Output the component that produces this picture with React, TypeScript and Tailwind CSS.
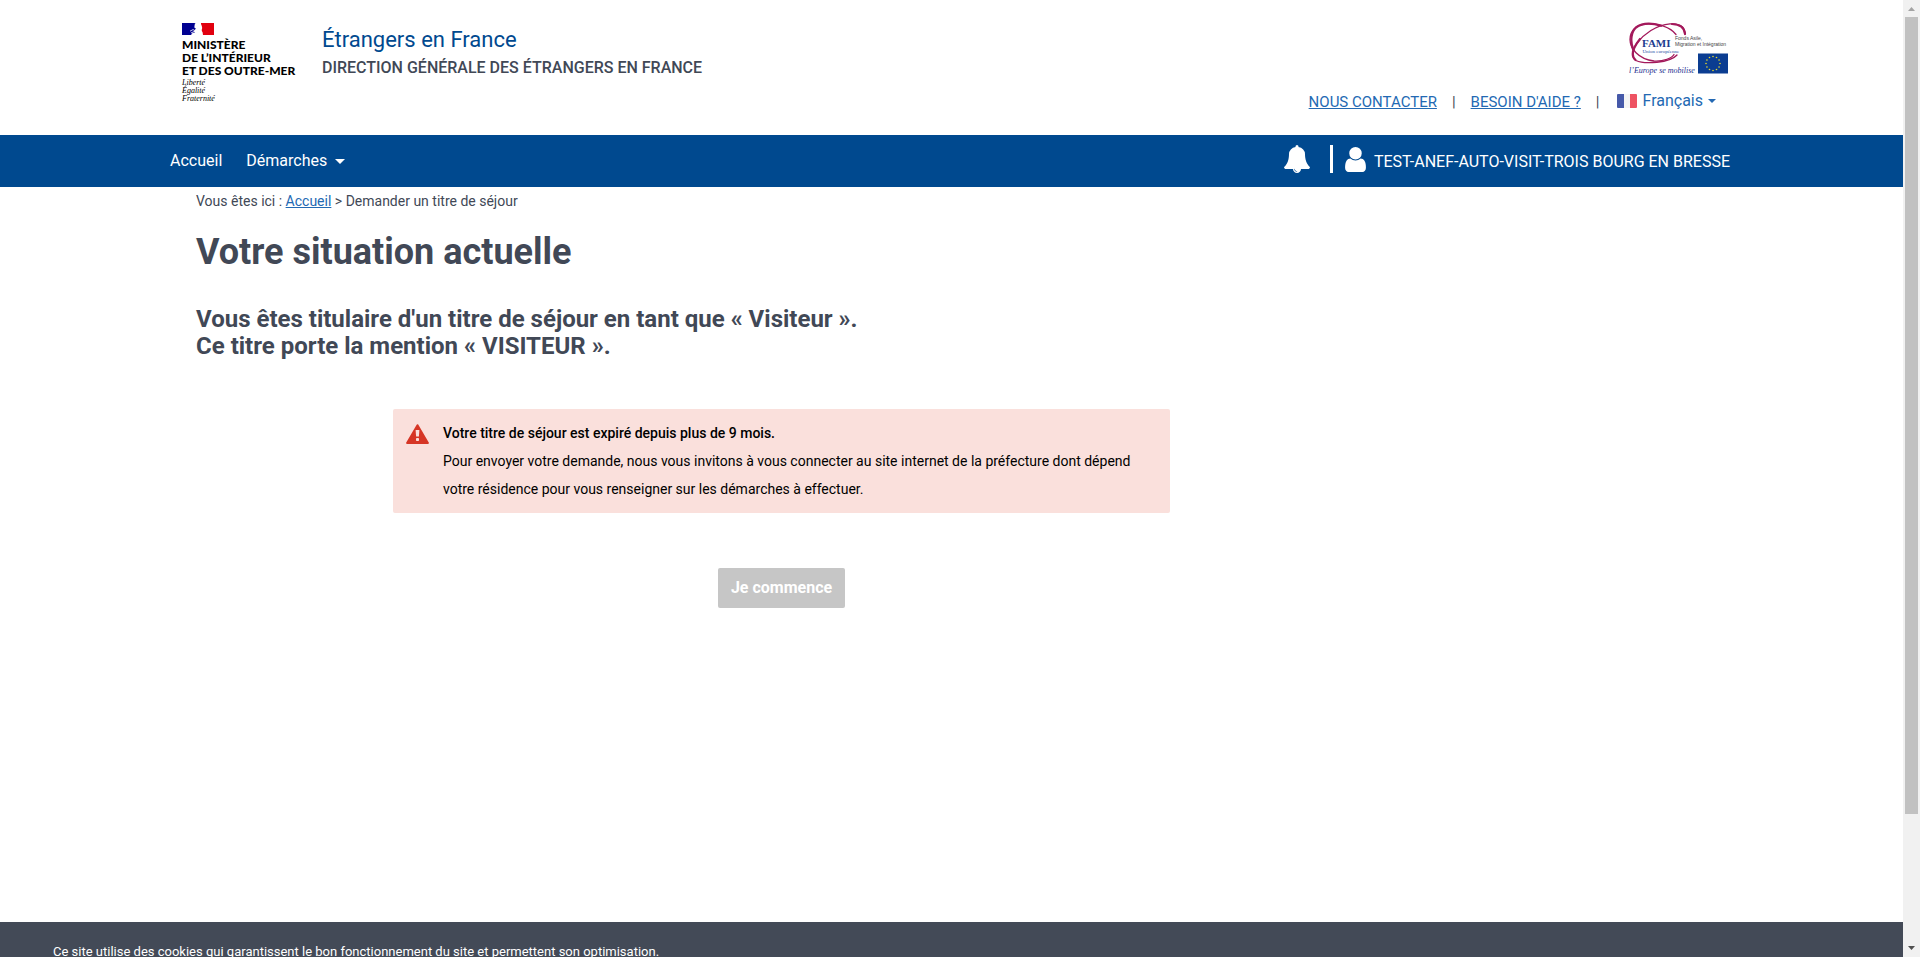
import React from "react";

const SANS = "font-['Roboto','Liberation_Sans',sans-serif]";

function MinistryLogo() {
  return (
    <a href="#" className="block w-[117px] shrink-0 text-black no-underline">
      <svg viewBox="0 0 32 12" className="block h-3 w-8" aria-hidden="true">
        <rect width="14" height="12" fill="#000091" />
        <rect x="19" width="13" height="12" fill="#e1000f" />
        <path
          d="M13 0 Q15 1 17.5 0.3 Q19.6 0.8 19.8 3 Q20.6 5 19.8 6.6 Q19.4 8.2 20.6 9.2 L21 12 H9 Q10 9.6 13 9.6 L11.6 8.2 L14 5.6 Q12 5.2 12.4 3.4 Z"
          fill="#fff"
        />
        <path d="M8 8.2 L11 6.6 L12.6 7.4 M9 10 L12 8.6" stroke="#fff" strokeWidth="0.8" fill="none" />
      </svg>
      <span className="mt-[3px] block whitespace-nowrap font-['Lato','Open_Sans',sans-serif] text-xs leading-[13px] font-black">
        MINISTÈRE
        <br />
        DE L’INTÉRIEUR
        <br />
        ET DES OUTRE-MER
      </span>
      <span className="mt-[2px] block font-['Liberation_Serif',serif] text-[8px] leading-[8px] italic">
        Liberté
        <br />
        Égalité
        <br />
        Fraternité
      </span>
    </a>
  );
}

function FamiLogo() {
  const stars = Array.from({ length: 12 }, (_, i) => {
    const angle = (i * Math.PI) / 6;
    return { x: 85 + 7 * Math.sin(angle), y: 43.5 - 7 * Math.cos(angle) };
  });
  return (
    <svg viewBox="0 0 102 58" className="block h-[58px] w-[102px]" role="img" aria-label="FAMI">
      <g fill="none" stroke="#a3195b" strokeLinecap="round">
        <path d="M48 13.5 C42 6 30 2.5 20 2.8 C8 3 2 10 2 18.5 C2 27 10 38 26 40 C36 40.5 44 37 46 33.5" strokeWidth="1.3" />
        <path d="M33 4.6 C24 2 14 2 8 6.5 C3 11 2 20 5 28" strokeWidth="2.3" />
        <path d="M57 13.5 C57 5 51 2.6 42 2.8 C28 4 16 13 9 22 C3 31 4 37 8 39.5 C16 43.5 42 42 49 34" strokeWidth="1.3" />
        <path d="M57 13 C56.5 6 52 3.4 44 3 M12 18 C4 28 3 35 7.5 39" strokeWidth="2.2" />
      </g>
      <text x="14" y="25.5" fontFamily="'Liberation Serif', serif" fontSize="11" fontWeight="bold" fill="#1d3c8f">FAMI</text>
      <text x="47" y="19" fontFamily="'Liberation Sans', sans-serif" fontSize="5" fill="#444">Fonds Asile,</text>
      <text x="47" y="24.5" fontFamily="'Liberation Sans', sans-serif" fontSize="5" fill="#444">Migration et Intégration</text>
      <text x="14.5" y="32" fontFamily="'Liberation Serif', serif" fontSize="5" fill="#1d4b9f">Union européenne</text>
      <text x="1" y="52" fontFamily="'Liberation Serif', serif" fontSize="8" fontStyle="italic" fill="#1d2f8f">l’Europe se mobilise</text>
      <rect x="70" y="32.5" width="30" height="20" fill="#0b3d91" />
      {stars.map((s, i) => (
        <circle key={i} cx={s.x} cy={s.y - 1} r="0.8" fill="#e8d92c" />
      ))}
    </svg>
  );
}

function Caret({ className }: { className: string }) {
  return (
    <svg viewBox="0 0 10 5" className={className} fill="currentColor" aria-hidden="true">
      <path d="M0 0 H10 L5 5 Z" />
    </svg>
  );
}

function FrenchFlag() {
  return (
    <svg viewBox="0 0 20 14" className="h-3.5 w-5" aria-hidden="true">
      <path d="M1 0 H7 V14 H1 Q0 14 0 13 V1 Q0 0 1 0 Z" fill="#4659a9" />
      <rect x="7" width="6" height="14" fill="#f4f4f4" />
      <path d="M13 0 H19 Q20 0 20 1 V13 Q20 14 19 14 H13 Z" fill="#ee5363" />
    </svg>
  );
}

function BellIcon() {
  return (
    <svg viewBox="64 0 1664 1792" className="h-7 w-[26px]" fill="currentColor" aria-hidden="true">
      <path d="M912 1696q0-16-16-16-59 0-101.5-42.5t-42.5-101.5q0-16-16-16t-16 16q0 73 51.5 124.5t124.5 51.5q16 0 16-16zm816-288q0 52-38 90t-90 38h-448q0 106-75 181t-181 75-181-75-75-181h-448q-52 0-90-38t-38-90q50-42 91-88t85-119.5 74.5-158.5 50-206 19.5-260q0-152 117-282.5t307-158.5q-8-19-8-39 0-40 28-68t68-28 68 28 28 68q0 20-8 39 190 28 307 158.5t117 282.5q0 139 19.5 260t50 206 74.5 158.5 85 119.5 91 88z" />
    </svg>
  );
}

function UserIcon() {
  return (
    <svg viewBox="256 128 1280 1536" className="h-[25px] w-[21px]" fill="currentColor" aria-hidden="true">
      <path d="M1536 1399q0 109-62.5 187t-150.5 78h-854q-88 0-150.5-78t-62.5-187q0-85 8.5-160.5t31.5-152 58.5-131 94-89 134.5-34.5q131 128 313 128t313-128q76 0 134.5 34.5t94 89 58.5 131 31.5 152 8.5 160.5zm-256-887q0 159-112.5 271.5t-271.5 112.5-271.5-112.5-112.5-271.5 112.5-271.5 271.5-112.5 271.5 112.5 112.5 271.5z" />
    </svg>
  );
}

function WarningIcon() {
  return (
    <svg viewBox="0 0 23 20" className="mt-[5px] h-5 w-[23px] shrink-0" aria-hidden="true">
      <path d="M11.5 1.2 L21.9 18.9 H1.1 Z" fill="#d63626" stroke="#d63626" strokeWidth="2" strokeLinejoin="round" />
      <path d="M9.6 6 H13.4 L12.9 12.6 H10.1 Z" fill="#fae0dc" />
      <rect x="10" y="14" width="3" height="3" rx="0.8" fill="#fae0dc" />
    </svg>
  );
}

function ScrollRail() {
  return (
    <div className="flex w-[17px] shrink-0 flex-col items-center bg-[#f1f1f1]" aria-hidden="true">
      <svg viewBox="0 0 17 17" className="h-[17px] w-[17px] shrink-0">
        <path d="M5 11 H12 L8.5 7 Z" fill="#a3a3a3" />
      </svg>
      <div className="w-[13px] grow-[797] bg-[#c1c1c1]" />
      <div className="grow-[126]" />
      <svg viewBox="0 0 17 17" className="h-[17px] w-[17px] shrink-0">
        <path d="M5 6 H12 L8.5 10 Z" fill="#505050" />
      </svg>
    </div>
  );
}

export default function App() {
  return (
    <div className={`${SANS} flex h-screen overflow-hidden bg-white text-[#414856]`}>
      <div className="flex min-w-0 flex-1 flex-col">
        <header className="px-[170px]">
          <div className="flex h-[135px] justify-between pl-3">
            <div className="flex gap-[23px] pt-[23px]">
              <MinistryLogo />
              <div className="pt-px">
                <p className="text-[22px] leading-8 text-[#00498f]">Étrangers en France</p>
                <p className="text-base leading-6 font-medium">DIRECTION GÉNÉRALE DES ÉTRANGERS EN FRANCE</p>
              </div>
            </div>
            <div className="flex flex-col items-end pt-[21px] pr-[3px]">
              <FamiLogo />
              <div className="mt-[10px] flex items-center text-[15px] leading-6 text-[#2369b3]">
                <a href="#" className="underline">NOUS CONTACTER</a>
                <span className="px-[15px] text-[#414856]">|</span>
                <a href="#" className="underline">BESOIN D'AIDE ?</a>
                <span className="pr-[18px] pl-[15px] text-[#414856]">|</span>
                <button type="button" className="mr-[14px] flex items-center gap-[5px] pb-[2px] text-base leading-6">
                  <FrenchFlag />
                  Français
                  <Caret className="h-1 w-2" />
                </button>
              </div>
            </div>
          </div>
        </header>

        <nav className="flex h-[52px] shrink-0 items-center justify-between bg-[#00498f] px-[170px] text-base text-white">
          <div className="flex items-center gap-6">
            <a href="#">Accueil</a>
            <button type="button" className="flex items-center gap-2">
              Démarches
              <Caret className="h-[5px] w-[10px]" />
            </button>
          </div>
          <div className="flex items-center pr-[3px] pb-1">
            <button type="button" aria-label="Notifications" className="pr-5">
              <BellIcon />
            </button>
            <button type="button" className="flex items-center">
              <span className="mr-3 h-7 w-[3px] bg-white" />
              <UserIcon />
              <span className="pt-[6px] pl-2">TEST-ANEF-AUTO-VISIT-TROIS BOURG EN BRESSE</span>
            </button>
          </div>
        </nav>

        <main className="flex-1 px-[196px]">
          <p className="pt-1 text-sm leading-5">
            Vous êtes ici : <a href="#" className="text-[#2369b3] underline">Accueil</a> &gt; Demander un titre de séjour
          </p>
          <h1 className="mt-[21px] text-4xl leading-10 font-bold">Votre situation actuelle</h1>
          <h2 className="mt-[34px] text-2xl leading-[27px] font-bold">
            Vous êtes titulaire d'un titre de séjour en tant que « Visiteur ».
            <br />
            Ce titre porte la mention « VISITEUR ».
          </h2>
          <div className="mt-[49px] flex max-w-[1171px] flex-col items-center">
            <div role="alert" className="flex w-[777px] gap-[14px] rounded-xs bg-[#fae0dc] p-[10px] pl-[13px] text-sm leading-7 text-black">
              <WarningIcon />
              <div>
                <p className="font-medium">Votre titre de séjour est expiré depuis plus de 9 mois.</p>
                <p>
                  Pour envoyer votre demande, nous vous invitons à vous connecter au site internet de la préfecture dont dépend votre résidence pour vous renseigner sur les démarches à effectuer.
                </p>
              </div>
            </div>
            <button type="button" disabled className="mt-[55px] h-10 rounded-xs bg-[#c6c6c6] px-[13px] text-base font-bold text-white">
              Je commence
            </button>
          </div>
        </main>

        <footer className="h-[35px] shrink-0 overflow-hidden bg-[#434a57] px-[53px] pt-[22px] text-[13px] leading-4 text-white">
          Ce site utilise des cookies qui garantissent le bon fonctionnement du site et permettent son optimisation.
        </footer>
      </div>
      <ScrollRail />
    </div>
  );
}
